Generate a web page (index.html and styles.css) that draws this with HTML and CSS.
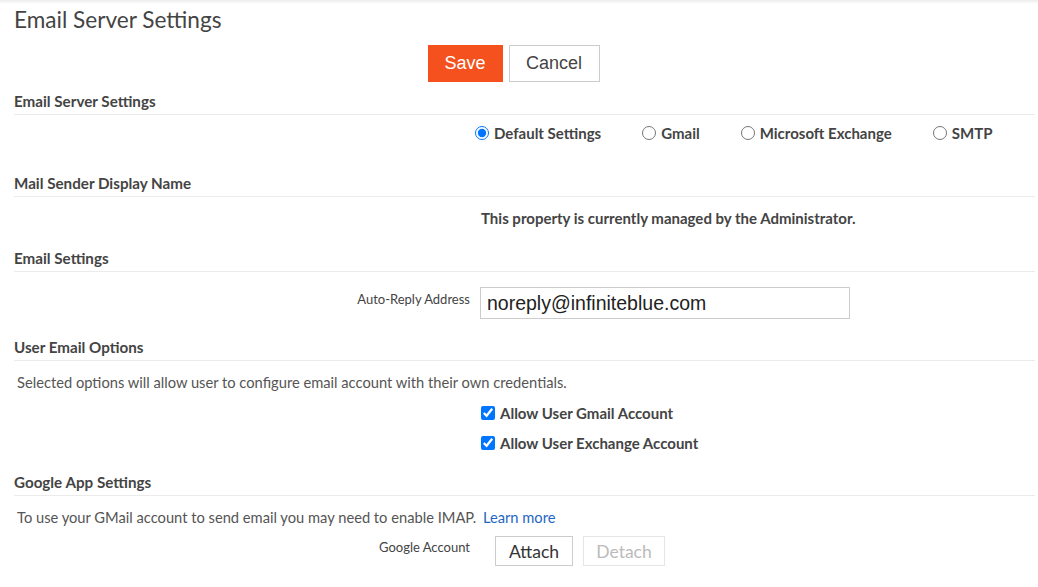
FILE: index.html
```html
<!DOCTYPE html>
<html>
<head>
<meta charset="utf-8">
<link rel="stylesheet" href="styles.css">
</head>
<body>
<div class="topshade"></div>
<div class="page">
  <h1 class="title">Email Server Settings</h1>
  <div class="actions">
    <button class="btn btn-primary">Save</button>
    <button class="btn btn-default">Cancel</button>
  </div>

  <section class="section">
    <h2 class="section-head">Email Server Settings</h2>
    <div class="body body-radios">
      <div class="radios">
        <label class="radio"><input type="radio" name="srv" checked><span>Default Settings</span></label>
        <label class="radio"><input type="radio" name="srv"><span>Gmail</span></label>
        <label class="radio"><input type="radio" name="srv"><span>Microsoft Exchange</span></label>
        <label class="radio"><input type="radio" name="srv"><span>SMTP</span></label>
      </div>
    </div>
  </section>

  <section class="section">
    <h2 class="section-head">Mail Sender Display Name</h2>
    <div class="body body-managed">
      <div class="form-row">
        <div class="label"></div>
        <div class="value managed">This property is currently managed by the Administrator.</div>
      </div>
    </div>
  </section>

  <section class="section">
    <h2 class="section-head">Email Settings</h2>
    <div class="body body-input">
      <div class="form-row">
        <div class="label label-top">Auto-Reply Address</div>
        <div class="value"><input class="text-input" type="text" value="noreply@infiniteblue.com"></div>
      </div>
    </div>
  </section>

  <section class="section">
    <h2 class="section-head">User Email Options</h2>
    <div class="body body-options">
      <p class="desc">Selected options will allow user to configure email account with their own credentials.</p>
      <div class="form-row check-row">
        <div class="label"></div>
        <label class="value check"><input type="checkbox" checked><span>Allow User Gmail Account</span></label>
      </div>
      <div class="form-row check-row">
        <div class="label"></div>
        <label class="value check"><input type="checkbox" checked><span>Allow User Exchange Account</span></label>
      </div>
    </div>
  </section>

  <section class="section">
    <h2 class="section-head">Google App Settings</h2>
    <div class="body body-google">
      <p class="desc">To use your GMail account to send email you may need to enable IMAP. <a class="link" href="#">Learn more</a></p>
      <div class="form-row google-row">
        <div class="label label-google">Google Account</div>
        <div class="value btns">
          <button class="btn-small">Attach</button>
          <button class="btn-small disabled">Detach</button>
        </div>
      </div>
    </div>
  </section>
</div>
</body>
</html>
```

FILE: styles.css
```css
* { box-sizing: border-box; }
html, body { margin: 0; padding: 0; background: #fff; }
body {
  font-family: Lato, "Open Sans", sans-serif;
  color: #444;
  width: 1038px;
  height: 587px;
  overflow: hidden;
  position: relative;
}
.topshade {
  height: 4px;
  background: linear-gradient(#ececec, rgba(255,255,255,0));
}
.page {
  padding: 0 3px 0 14px;
}
.title {
  margin: 2px 0 0;
  font-size: 22.6px;
  line-height: 28px;
  font-weight: 400;
  color: #444;
}
.actions {
  display: flex;
  justify-content: center;
  gap: 6px;
  margin-top: 11px;
  padding-right: 22px;
}
.btn {
  height: 37px;
  font-family: "Liberation Sans", Arial, sans-serif;
  font-size: 18px;
  padding: 0;
  border-radius: 0;
}
.btn-primary {
  width: 75px;
  background: #f4511e;
  color: #fff;
  border: 1px solid #f4511e;
}
.btn-default {
  width: 91px;
  background: #fff;
  color: #444;
  border: 1px solid #ccc;
}
.section-head {
  margin: 0;
  font-size: 15.2px;
  line-height: 20px;
  font-weight: 700;
  color: #444;
  padding-bottom: 3px;
  border-bottom: 1px solid #ebebeb;
}
.actions + .section .section-head { margin-top: 9px; }
.body-radios { padding: 8px 0 30px; }
.body-managed { padding: 11px 0 20px; }
.body-input { padding: 15px 0 18px; }
.body-options { padding: 11px 0 14px; }
.body-google { padding: 11px 0 0; }

.radios {
  display: flex;
  padding-left: 461px;
  gap: 41px;
  line-height: 20px;
}
.radio {
  display: flex;
  align-items: center;
  gap: 5px;
  font-size: 15px;
  font-weight: 700;
  color: #444;
}
.radio input {
  margin: 0;
  width: 14px;
  height: 14px;
}
.form-row {
  display: grid;
  grid-template-columns: 456px 1fr;
  column-gap: 10px;
}
.label {
  text-align: right;
  font-size: 13px;
  color: #444;
  font-weight: 400;
}
.label-top { padding-top: 4px; }
.value { line-height: 20px; }
.managed {
  font-size: 15px;
  font-weight: 700;
  color: #444;
  padding-left: 1px;
}
.text-input {
  width: 370px;
  height: 32px;
  border: 1px solid #ccc;
  border-radius: 0;
  font-family: "Liberation Sans", Arial, sans-serif;
  font-size: 19.5px;
  color: #222;
  padding: 0 6px;
  display: block;
}
.desc {
  margin: 0 0 0 3px;
  font-size: 14.7px;
  line-height: 20px;
  color: #555;
}
.check-row { height: 30px; align-items: center; }
.body-options .desc { margin-bottom: 6px; }
.check {
  display: flex;
  align-items: center;
  gap: 5px;
  font-size: 15px;
  font-weight: 700;
  color: #444;
  padding-left: 1px;
}
.check input {
  margin: 0;
  width: 14px;
  height: 14px;
}
.link { color: #1f67c2; text-decoration: none; margin-left: 3px; }
.google-row { margin-top: 9px; align-items: start; }
.label-google { line-height: 20px; padding-top: 1px; }
.btns { display: flex; gap: 10px; padding-left: 15px; }
.btn-small {
  height: 30px;
  background: #fff;
  border: 1px solid #ccc;
  border-radius: 0;
  font-family: Lato, sans-serif;
  font-size: 17.5px;
  color: #333;
  width: 78px;
  padding: 0;
}
.btn-small.disabled {
  width: 82px;
  color: #bbb;
  border-color: #e6e6e6;
}
```
